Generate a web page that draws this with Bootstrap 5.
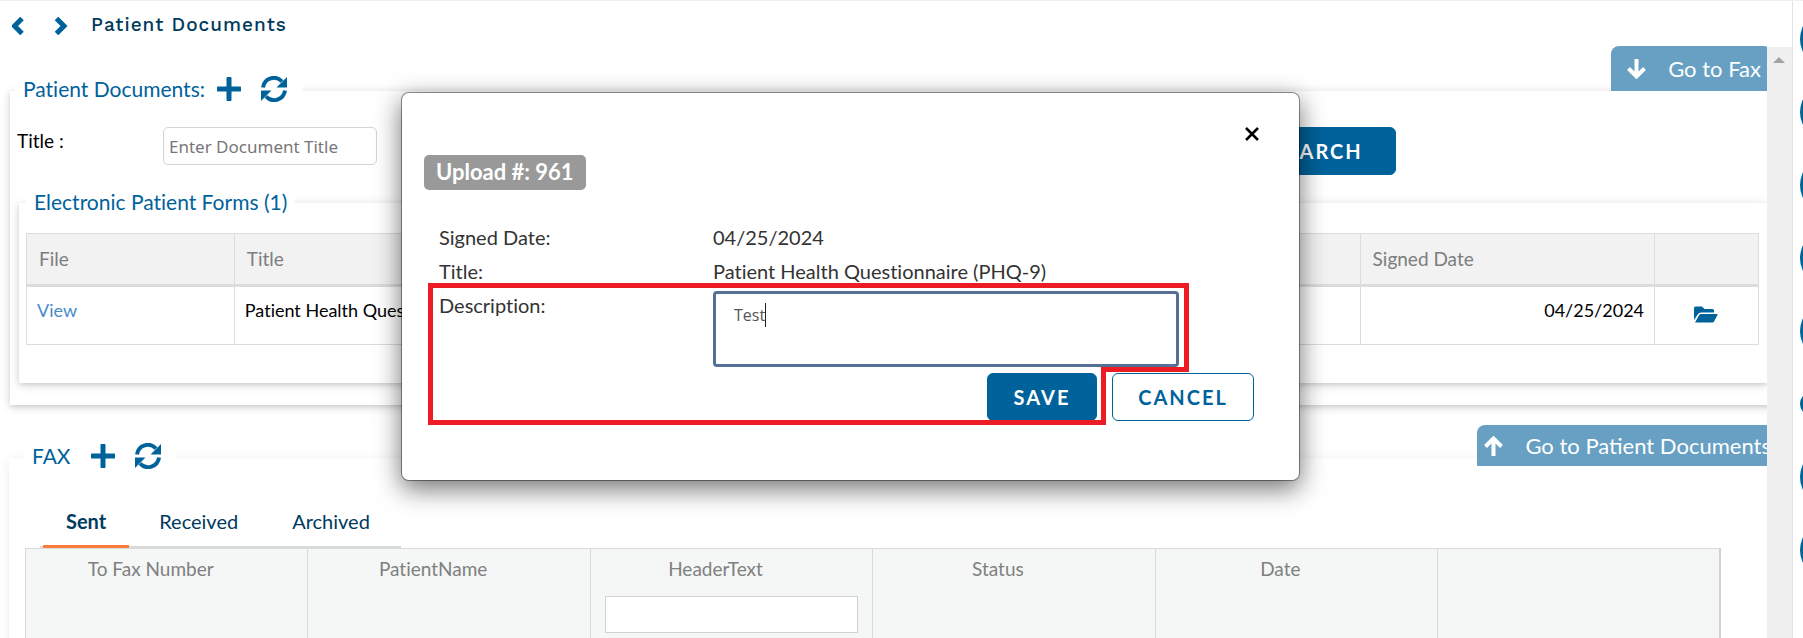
<!DOCTYPE html>
<html lang="en">
<head>
<meta charset="utf-8">
<meta name="viewport" content="width=device-width, initial-scale=1">
<title>Patient Documents</title>
<link rel="stylesheet" href="https://cdn.jsdelivr.net/npm/bootstrap@5.3.0/dist/css/bootstrap.min.css">
<style>
:root{--brand:#00629b;--navy:#003a5d;--sky:#67a0c3}
body{font-family:Lato,"Open Sans",sans-serif;font-size:18px;line-height:24px;color:#000;background:#fff;overflow:hidden;font-variant-ligatures:none}
.shell{border-top:1px solid #edf1f7}
.page-head{height:45px;padding:4px 12px 0}
.page-title{font-family:"Work Sans",Inter,sans-serif;font-size:19px;font-weight:500;letter-spacing:1px;color:var(--navy);margin-left:19px}
.icon-btn{border:0;background:none;padding:0;color:var(--brand);line-height:0}
.scroll-track{width:25px;background:#f0f0f0;margin-top:1px;padding-top:10px}
.rail{width:11px;border-left:1px solid #e2e2e2;padding:9px 0 0 7px}
.rail-item{width:58px;height:58px;margin-bottom:15px;background:var(--brand)}
.rail-small{width:24px;height:24px;margin:32px 0}
.panel{box-shadow:0 2px 10px rgba(0,0,0,.14),0 2px 4px rgba(0,0,0,.1);min-width:0}
.panel legend{float:none;width:auto;margin:0;background:#fff;color:var(--brand);font-size:21px;line-height:26px}
.panel-docs{margin:-15px -10px 0 10px;padding:0 0 22px 7px}
.panel-docs>legend,.panel-fax>legend{height:30px}
.panel-docs>legend{padding:0 15px 4px 8px;margin-left:-2px}
.panel-forms{margin:14px 10px 0 2px;padding:0 8px 38px 7px}
.panel-forms>legend{padding:0 8px 2px}
.panel-fax{margin:-23px -10px 0 9px;padding:0 56px 0 16px;box-shadow:0 2px 10px rgba(0,0,0,.08)}
.panel-fax>legend{padding:0 15px 4px 7px}
.jump{background:var(--sky);color:#fff;font-size:22px;border:0;border-radius:8px 8px 0 0;white-space:nowrap;gap:22px}
.jump-fax{height:45px;padding:0 11px 0 16px;margin-right:-5px}
.jump-docs{height:41px;padding:0 12px 0 7px;margin-right:-16px}
.search-row{padding-top:21px}
.search-row label{width:146px;padding-top:2px;font-size:19px}
.doc-input{width:214px;height:38px;padding:0 5px;border:1px solid #d4d4d4;border-radius:5px;font-family:"Noto Sans",sans-serif;font-size:17px}
.doc-input::placeholder{color:#777}
.action{height:48px;border-radius:6px;font-size:20px;font-weight:700;letter-spacing:2px;border:1px solid var(--brand);background:var(--brand);color:#fff;padding:0}
.action-search{width:156px;margin-right:381px}
.action-save{width:110px}
.action-cancel{width:142px;background:#fff;color:var(--brand)}
.forms-grid{margin-top:16px;table-layout:fixed;width:100%;border:1px solid #d0d0d0;border-collapse:collapse}
.forms-grid th{background:#f2f2f2;color:#7d7d7d;font-size:19px;font-weight:400;height:52px;padding:0 12px;border:1px solid #dcdcdc;border-bottom:3px solid #dcdcdc}
.forms-grid td{height:59px;padding:11px 10px 0;border:1px solid #dcdcdc;vertical-align:top}
.forms-grid a{color:#4a8bc9;text-decoration:none}
.fax-tabs{margin:27px 0 0 15px;width:361px;height:48px;border-bottom:2px solid #d8dadc}
.fax-tabs .nav-link{border:0;border-radius:0;background:none;height:48px;padding:0 27px 6px;color:var(--navy);font-size:20px}
.fax-tabs .nav-link.active{border-bottom:3px solid #ff7b3a;font-weight:700;padding:0 23px 4px;color:var(--navy);margin:0 3px}
.fax-grid{table-layout:fixed;width:100%;border:1px solid #cfd3d2;border-right-width:2px}
.fax-grid th{background:#f4f7f6;color:#808080;font-size:19px;font-weight:400;text-align:center;vertical-align:top;height:110px;padding:8px 14px;border:1px solid #d8dbda}
.fax-grid th>label,.fax-grid th>span{display:block;padding-right:32px}
.fax-grid input{display:block;width:100%;height:37px;margin-top:15px;border:1px solid #d0d3d2;background:#fff}
.overlay{position:absolute;inset:0;padding:92px 102px 0 0;z-index:5;pointer-events:none}
.dialog{position:relative;width:899px;height:389px;background:#fff;border:1px solid rgba(0,0,0,.4);border-radius:8px;background-clip:padding-box;box-shadow:0 8px 26px rgba(0,0,0,.55);pointer-events:auto;padding:34px 45px 0 22px}
.dialog-x{margin-right:-5px}
.upload-tag{width:fit-content;margin-top:14px;background:#999;border-radius:5px;color:#fff;font-size:22px;font-weight:700;height:35px;padding:0 12px 2px}
.details{margin:30px 0 0 15px;font-size:20px;color:#333;display:grid;grid-template-columns:274px 466px;grid-auto-rows:34px;line-height:34px}
.details dt,.details dd,.details label{font-weight:400;margin:0}
.desc-box{height:76px;margin-top:3px;border:3px solid #566f94;border-radius:4px;padding:9px 18px;font-family:"Open Sans",sans-serif;font-size:16px;font-weight:400;line-height:24px;color:#555;resize:none;outline:0;caret-color:transparent}
.text-cursor{position:absolute;left:52px;top:15px;width:1px;height:24px;background:#222}
.dialog-foot{margin-top:51px;gap:15px}
.callout-line{position:absolute;left:26px;top:190px;pointer-events:none}
</style>
</head>
<body>
<div class="shell d-flex vh-100 overflow-hidden position-relative">
  <main class="flex-grow-1 d-flex flex-column overflow-hidden">
    <header class="page-head d-flex align-items-center flex-shrink-0">
      <button class="icon-btn me-4" aria-label="Previous"><svg width="18" height="18" viewBox="0 0 18 18"><path d="M10 1.500 2.500 9l7.500 7.500" fill="none" stroke="currentColor" stroke-width="5"/></svg></button>
      <button class="icon-btn" aria-label="Next"><svg width="18" height="18" viewBox="0 0 18 18"><path d="M2.500 1.500 10 9l-7.500 7.500" fill="none" stroke="currentColor" stroke-width="5"/></svg></button>
      <h1 class="page-title mb-0">Patient Documents</h1>
    </header>
    <div class="d-flex flex-grow-1 overflow-hidden">
      <div class="flex-grow-1 overflow-hidden">
        <div class="d-flex justify-content-end">
          <button class="jump jump-fax d-flex align-items-center position-relative z-1"><svg width="19" height="20" viewBox="0 0 19 20"><path d="M9.500 0v17M1.500 9.500l8 8 8-8" fill="none" stroke="#fff" stroke-width="4"/></svg>Go to Fax</button>
        </div>
        <fieldset class="panel panel-docs">
          <legend class="d-inline-flex align-items-center">Patient Documents:
            <button class="icon-btn ms-2 ps-1" aria-label="Add document"><svg width="24" height="24" viewBox="0 0 24 24"><path d="M12 1.500v21M1.500 12h21" stroke="currentColor" stroke-width="5" stroke-linecap="round"/></svg></button>
            <button class="icon-btn ms-3 ps-1" aria-label="Refresh documents"><svg width="26" height="26" viewBox="0 0 26 26"><g id="sync"><path d="M2 11.500A11 11 0 0 1 21 5.500" fill="none" stroke="currentColor" stroke-width="4"/><path d="M26 1v10.500H15.500Z" fill="currentColor"/><path d="M24 14.500A11 11 0 0 1 5 20.500" fill="none" stroke="currentColor" stroke-width="4"/><path d="M0 25V14.500h10.500Z" fill="currentColor"/></g></svg></button>
          </legend>
          <div class="search-row d-flex align-items-start">
            <label for="docTitle">Title :</label>
            <input id="docTitle" class="doc-input" type="text" placeholder="Enter Document Title">
            <button class="action action-search ms-auto">SEARCH</button>
          </div>
          <fieldset class="panel panel-forms">
            <legend>Electronic Patient Forms (1)</legend>
            <table class="forms-grid">
              <colgroup><col style="width:12%"><col style="width:65%"><col style="width:17%"><col style="width:6%"></colgroup>
              <thead><tr><th>File</th><th>Title</th><th>Signed Date</th><th></th></tr></thead>
              <tbody><tr>
                <td><a href="#">View</a></td>
                <td>Patient Health Questionnaire (PHQ-9)</td>
                <td class="text-end">04/25/2024</td>
                <td class="text-center"><button class="icon-btn mt-2" aria-label="Open folder"><svg width="24" height="17" viewBox="0 0 24 17"><path d="M0 14V2Q0 .5 1.500.5H8L10.500 3H18.500Q20 3 20 4.500V6.500H7Q5 6.500 4 8Z M1 16.500 5.200 9Q5.700 8 7 8H23Q24 8 23.500 9L20 15.500Q19.400 16.500 18.500 16.500Z" fill="currentColor"/></svg></button></td>
              </tr></tbody>
            </table>
          </fieldset>
        </fieldset>
        <div class="d-flex justify-content-end mt-3 pt-1">
          <button class="jump jump-docs d-flex align-items-center position-relative z-1"><svg width="19" height="20" viewBox="0 0 19 20"><path d="M9.500 20V3M1.500 10.500l8-8 8 8" fill="none" stroke="#fff" stroke-width="4"/></svg>Go to Patient Documents</button>
        </div>
        <fieldset class="panel panel-fax">
          <legend class="d-inline-flex align-items-center">FAX
            <button class="icon-btn ms-3 ps-1" aria-label="Add fax"><svg width="24" height="24" viewBox="0 0 24 24"><path d="M12 1.500v21M1.500 12h21" stroke="currentColor" stroke-width="5" stroke-linecap="round"/></svg></button>
            <button class="icon-btn ms-3 ps-1" aria-label="Refresh faxes"><svg width="26" height="26" viewBox="0 0 26 26"><use href="#sync"/></svg></button>
          </legend>
          <nav class="nav fax-tabs flex-nowrap">
            <button class="nav-link active">Sent</button>
            <button class="nav-link">Received</button>
            <button class="nav-link">Archived</button>
          </nav>
          <table class="fax-grid">
            <thead><tr>
              <th><span>To Fax Number</span></th><th><span>PatientName</span></th>
              <th><label for="headerText">HeaderText</label><input id="headerText" type="text"></th>
              <th><span>Status</span></th><th><span>Date</span></th><th></th>
            </tr></thead>
          </table>
        </fieldset>
      </div>
      <div class="scroll-track flex-shrink-0 text-center lh-1"><svg class="d-block mx-auto" width="12" height="6" viewBox="0 0 12 6"><path d="M0 6 6 0l6 6Z" fill="#a3a3a3"/></svg></div>
    </div>
  </main>
  <aside class="rail flex-shrink-0 overflow-hidden">
    <div class="rail-item rounded-circle"></div><div class="rail-item rounded-circle"></div><div class="rail-item rounded-circle"></div><div class="rail-item rounded-circle"></div><div class="rail-item rounded-circle"></div>
    <div class="rail-item rail-small rounded-circle"></div>
    <div class="rail-item rounded-circle"></div><div class="rail-item rounded-circle"></div>
  </aside>
</div>

<div class="overlay d-flex justify-content-center align-items-start">
  <section class="dialog" role="dialog" aria-label="Upload 961">
    <div class="d-flex justify-content-end"><button class="icon-btn dialog-x text-black" aria-label="Close"><svg width="14" height="14" viewBox="0 0 14 14"><path d="M1 1l12 12M13 1 1 13" stroke="currentColor" stroke-width="2.500"/></svg></button></div>
    <div class="upload-tag d-flex align-items-center">Upload #: 961</div>
    <dl class="details">
      <dt>Signed Date:</dt><dd>04/25/2024</dd>
      <dt>Title:</dt><dd>Patient Health Questionnaire (PHQ-9)</dd>
      <dt><label for="desc">Description:</label></dt><dd class="position-relative lh-1"><textarea id="desc" class="desc-box w-100" autofocus>Test</textarea><span class="text-cursor"></span></dd>
    </dl>
    <div class="dialog-foot d-flex justify-content-end">
      <button class="action action-save">SAVE</button>
      <button class="action action-cancel">CANCEL</button>
    </div>
    <svg class="callout-line" width="762" height="143" viewBox="0 0 762 143"><path d="M2.500 2.500H758.500V86.500H675.500V139.500H2.500Z" fill="none" stroke="#ed1c24" stroke-width="5"/></svg>
  </section>
</div>
<script src="https://cdn.jsdelivr.net/npm/bootstrap@5.3.0/dist/js/bootstrap.bundle.min.js"></script>
</body>
</html>
